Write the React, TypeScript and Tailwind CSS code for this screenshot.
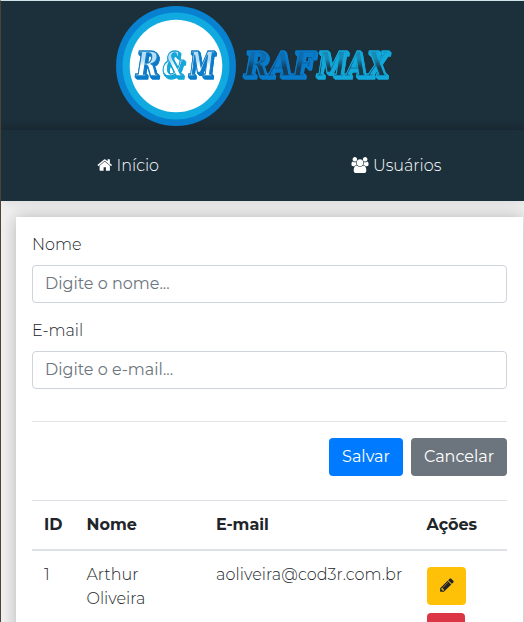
import type { ReactNode } from "react";

const HOME =
  "M1408 992v480q0 26-19 45t-45 19h-384v-384h-256v384h-384q-26 0-45-19t-19-45v-480q0-1 .5-3t.5-3l575-474 575 474q1 2 1 6zm223-69l-62 74q-8 9-21 11h-3q-13 0-21-7l-692-577-692 577q-12 8-24 7-13-2-21-11l-62-74q-8-10-7-23.5t11-21.5l719-599q32-26 76-26t76 26l244 204v-195q0-14 9-23t23-9h192q14 0 23 9t9 23v408l219 182q10 8 11 21.5t-7 23.5z";
const USERS =
  "M593 896q-162 5-265 128h-134q-82 0-138-40.5t-56-118.5q0-353 124-353 6 0 43.5 21t97.5 42.5 119 21.5q67 0 133-23-5 37-5 66 0 139 81 256zm1071 637q0 120-73 189.5t-194 69.5h-874q-121 0-194-69.5t-73-189.5q0-53 3.5-103.5t14-109 26.5-108.5 43-97.5 62-81 85.5-53.5 111.5-20q10 0 43 21.5t73 48 107 48 135 21.5 135-21.5 107-48 73-48 43-21.5q61 0 111.5 20t85.5 53.5 62 81 43 97.5 26.5 108.5 14 109 3.5 103.5zm-1024-1277q0 106-75 181t-181 75-181-75-75-181 75-181 181-75 181 75 75 181zm704 384q0 159-112.5 271.5t-271.5 112.5-271.5-112.5-112.5-271.5 112.5-271.5 271.5-112.5 271.5 112.5 112.5 271.5zm576 225q0 78-56 118.5t-138 40.5h-134q-103-123-265-128 81-117 81-256 0-29-5-66 66 23 133 23 59 0 119-21.5t97.5-42.5 43.5-21q124 0 124 353zm-128-609q0 106-75 181t-181 75-181-75-75-181 75-181 181-75 181 75 75 181z";
const PENCIL =
  "M363 1536l91-91-235-235-91 91v107h128v128h107zm523-928q0-22-22-22-10 0-17 7l-542 542q-7 7-7 17 0 22 22 22 10 0 17-7l542-542q7-7 7-17zm-54-192l416 416-832 832h-416v-416zm683 96q0 53-37 90l-166 166-416-416 166-165q36-38 90-38 53 0 91 38l235 234q37 39 37 91z";

type WordProps = { x: number; width: number; text: string; color: string; face: string; shadow: string };

/* Slab lettering with an engraved face; the drop shadows give its extruded edge. */
function Word({ x, width, text, color, face, shadow }: WordProps) {
  return (
    <text
      x={x}
      y={76}
      textLength={width}
      lengthAdjust="spacingAndGlyphs"
      fill={face}
      stroke={color}
      strokeWidth={1.3}
      className={`font-['DejaVu_Serif',serif] text-[33px] font-bold italic ${shadow}`}
    >
      {text}
    </text>
  );
}

function Logo() {
  const deep = "[filter:drop-shadow(1px_1px_0_#087bcb)_drop-shadow(1px_1px_0_#087bcb)_drop-shadow(0px_1px_0_#087bcb)]";
  const bright = "[filter:drop-shadow(1px_1px_0_#12a8db)_drop-shadow(1px_1px_0_#12a8db)_drop-shadow(0px_1px_0_#12a8db)]";
  return (
    <svg width="523" height="129" viewBox="1 1 523 129" className="block">
      <defs>
        <linearGradient id="light" gradientUnits="userSpaceOnUse" x1="0" x2="0" y1="51" y2="77">
          <stop offset="0.35" stopColor="#b9def4" />
          <stop offset="0.6" stopColor="#fff" />
        </linearGradient>
        <linearGradient id="deep" gradientUnits="userSpaceOnUse" x1="0" x2="0" y1="51" y2="77">
          <stop offset="0.3" stopColor="#0e6cae" />
          <stop offset="0.65" stopColor="#163f5b" />
        </linearGradient>
        <linearGradient id="bright" gradientUnits="userSpaceOnUse" x1="0" x2="0" y1="51" y2="77">
          <stop offset="0.3" stopColor="#1789b3" />
          <stop offset="0.65" stopColor="#193c4c" />
        </linearGradient>
      </defs>
      <circle cx="176" cy="66" r="60" fill="#0781d0" />
      <circle cx="176" cy="66" r="53.5" fill="#10aae0" />
      <circle cx="176" cy="66" r="46.3" fill="#fff" />
      <Word x={136} width={23} text="R" color="#147fc5" face="url(#light)" shadow={deep} />
      <Word x={163} width={21} text="&" color="#16a1d6" face="url(#light)" shadow={bright} />
      <Word x={189} width={25} text="M" color="#147fc5" face="url(#light)" shadow={deep} />
      <Word x={244} width={70} text="RAF" color="#087bcb" face="url(#deep)" shadow={deep} />
      <Word x={317} width={71} text="MAX" color="#12a8db" face="url(#bright)" shadow={bright} />
    </svg>
  );
}

function Field({ label, placeholder }: { label: string; placeholder: string }) {
  return (
    <label className="mb-4 block">
      <span className="mb-2 block leading-6">{label}</span>
      <input
        className="block h-[38px] w-full rounded border border-[#ced4da] bg-white px-3 pb-0.5 font-normal placeholder:text-[#6c757d] placeholder:opacity-100"
        placeholder={placeholder}
      />
    </label>
  );
}

function Button({ className, children }: { className: string; children: ReactNode }) {
  return <button className={`flex h-[38px] items-center justify-center rounded ${className}`}>{children}</button>;
}

export default function App() {
  return (
    <div className="flex h-[622px] w-[524px] flex-col overflow-hidden border-l border-t border-l-[#4c4237] border-t-[#cfe2e8] bg-[#f1f1f1] font-['Montserrat','Inter',sans-serif] text-[16px] font-light leading-6 text-[#212529]">
      <header className="h-[129px] shrink-0 bg-[linear-gradient(#1c303b_0,#1c303b_118px,#1a2b36_129px)]">
        <Logo />
      </header>
      <nav className="relative grid h-[71px] shrink-0 grid-cols-2 bg-[#1c303b] text-white shadow-[0_0_12px_rgba(0,0,0,0.12)]">
        <a className="flex items-center pl-24">
          <svg className="mb-0.5 mr-1 h-4 w-[15.5px]" viewBox="0 0 1664 1792" fill="currentColor"><path d={HOME} /></svg>
          <span>Início</span>
        </a>
        <a className="flex items-center pl-[88.5px]">
          <svg className="mb-0.5 mr-1 h-4 w-[18px]" viewBox="0 0 1920 1792" fill="currentColor"><path d={USERS} /></svg>
          <span>Usuários</span>
        </a>
      </nav>
      <main className="flex-1 pl-[15px] pr-px pt-4">
        <section className="h-[420px] bg-white p-4 shadow-[0_0_16px_rgba(0,0,0,0.25)]">
          <Field label="Nome" placeholder="Digite o nome..." />
          <Field label="E-mail" placeholder="Digite o e-mail..." />
          <div className="mt-8 border-t border-[#e4e4e4]" />
          <div className="mt-4 flex justify-end gap-2 font-normal text-white">
            <Button className="w-[74px] bg-[#007bff]">Salvar</Button>
            <Button className="w-24 bg-[#6c757d]">Cancelar</Button>
          </div>
          <table className="mt-6 w-full table-fixed border-collapse text-left">
            <colgroup><col className="w-[43px]" /><col className="w-[129px]" /><col className="w-[211px]" /><col /></colgroup>
            <thead>
              <tr className="h-[49px] border-b-2 border-t border-b-[#dee2e6] border-t-[#dee2e6] font-bold">
                <th className="pl-3">ID</th>
                <th className="pl-[11.5px]">Nome</th>
                <th className="pl-3">E-mail</th>
                <th className="pl-[11.5px]">Ações</th>
              </tr>
            </thead>
            <tbody>
              <tr className="align-top">
                <td className="pl-3 pt-3">1</td>
                <td className="pl-[11.5px] pt-3">Arthur<br />Oliveira</td>
                <td className="whitespace-nowrap pl-3 pt-3 tracking-[0.08px]">aoliveira@cod3r.com.br</td>
                <td className="pl-3 pt-4">
                  <div className="flex flex-col gap-2">
                    <Button className="w-[39px] bg-[#ffc107]">
                      <svg className="mb-0.5 h-4 w-[14px]" viewBox="0 0 1536 1792" fill="currentColor"><path d={PENCIL} /></svg>
                    </Button>
                    <Button className="w-[38px] bg-[#dc3545]">{null}</Button>
                  </div>
                </td>
              </tr>
            </tbody>
          </table>
        </section>
      </main>
    </div>
  );
}
